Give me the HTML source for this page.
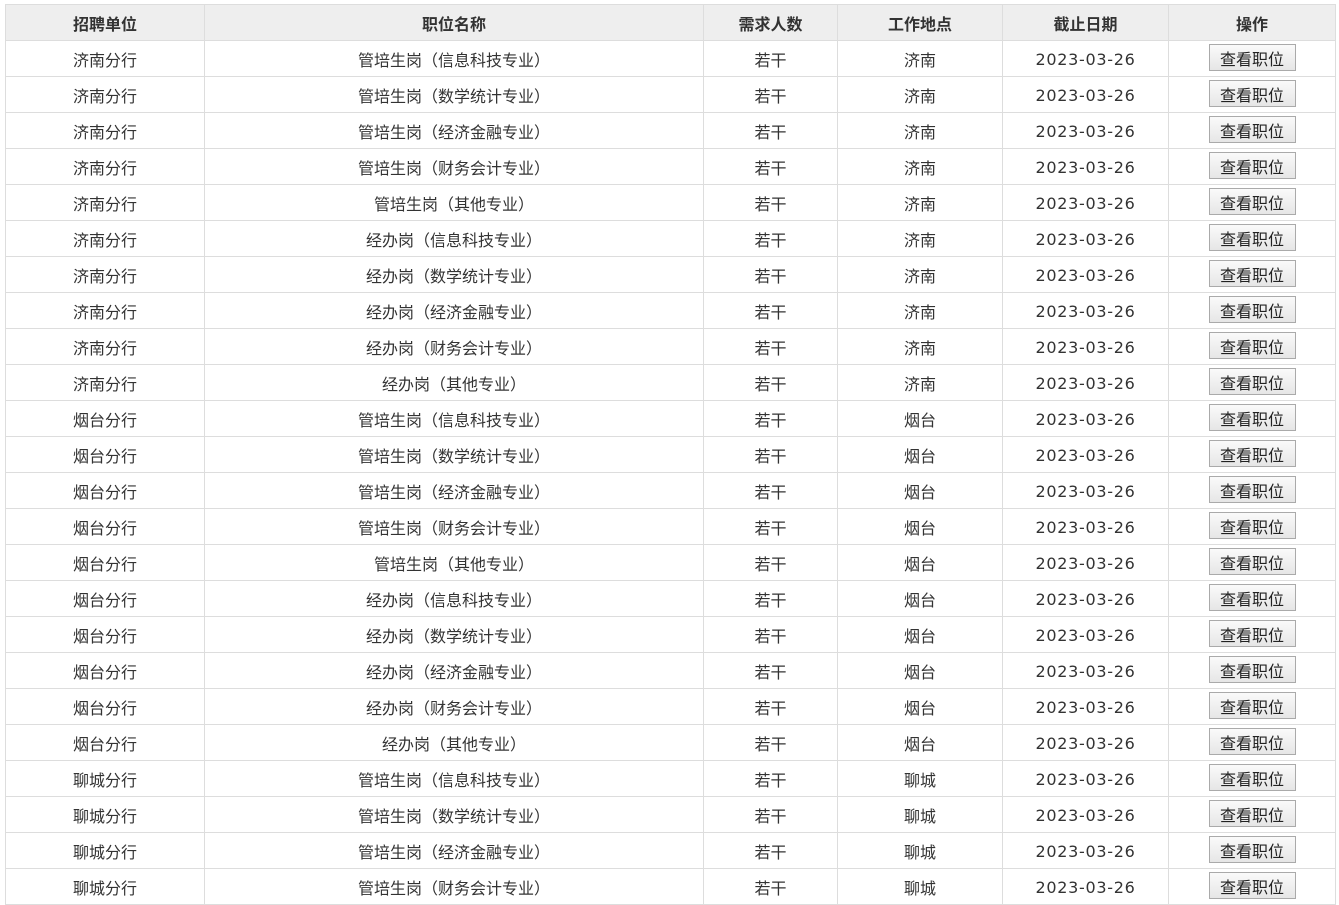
<!DOCTYPE html>
<html><head><meta charset="utf-8"><style>
body{margin:0;background:#fff;font-family:"Liberation Sans","Noto Sans CJK SC",sans-serif;}
table{position:absolute;left:5px;top:4px;border-collapse:collapse;table-layout:fixed;width:1330px;font-size:16px;color:#333;}
td,th{border:1px solid #ddd;height:35px;padding:0;text-align:center;white-space:nowrap;vertical-align:middle;}
th{background:#eee;font-weight:bold;}
td.d{font-family:"DejaVu Sans",sans-serif;letter-spacing:0.7px;padding-top:2px;height:33px;}
button{font-family:inherit;font-size:16px;color:#222;background:linear-gradient(#fafafa,#e6e6e6);border:1px solid #aaa;height:27px;width:87px;padding:0;margin:0;position:relative;top:-1px;}
</style></head><body>
<table>
<colgroup><col style="width:199px"><col style="width:499px"><col style="width:134px"><col style="width:165px"><col style="width:166px"><col style="width:167px"></colgroup>
<tr><th>招聘单位</th><th>职位名称</th><th>需求人数</th><th>工作地点</th><th>截止日期</th><th>操作</th></tr>
<script>
var cities=[["济南分行","济南"],["烟台分行","烟台"],["聊城分行","聊城"]];
var jobs=["管培生岗（信息科技专业）","管培生岗（数学统计专业）","管培生岗（经济金融专业）","管培生岗（财务会计专业）","管培生岗（其他专业）","经办岗（信息科技专业）","经办岗（数学统计专业）","经办岗（经济金融专业）","经办岗（财务会计专业）","经办岗（其他专业）"];
var n=0;
for(var c=0;c<3;c++)for(var j=0;j<10;j++){if(n>=24)break;n++;
document.write('<tr><td>'+cities[c][0]+'</td><td>'+jobs[j]+'</td><td>若干</td><td>'+cities[c][1]+'</td><td class="d">2023-03-26</td><td><button>查看职位</button></td></tr>');}
</script>
</table>
</body></html>
